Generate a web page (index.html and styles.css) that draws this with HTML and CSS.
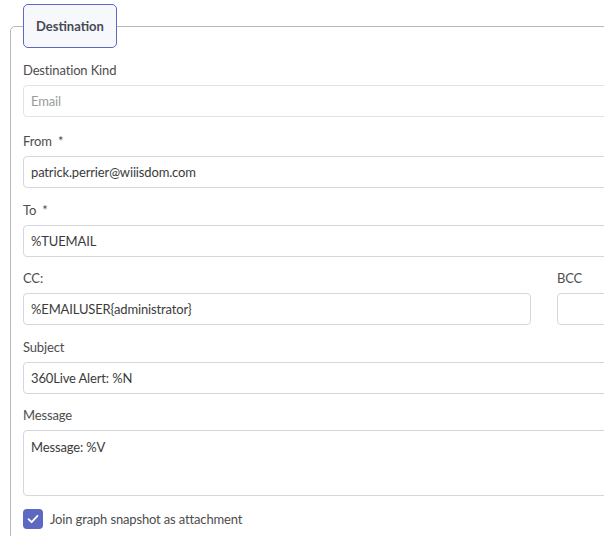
FILE: index.html
```html
<!DOCTYPE html>
<html lang="en">
<head>
    <meta charset="UTF-8">
    <title>Destination</title>
    <link rel="stylesheet" href="styles.css">
</head>
<body>
    <div class="panel">
        <div class="legend">Destination</div>

        <div class="field first">
            <label class="label">Destination Kind</label>
            <div class="input disabled">Email</div>
        </div>

        <div class="field">
            <label class="label">From <span class="req">*</span></label>
            <div class="input">patrick.perrier@wiiisdom.com</div>
        </div>

        <div class="field">
            <label class="label">To <span class="req">*</span></label>
            <div class="input">%TUEMAIL</div>
        </div>

        <div class="row">
            <div class="field">
                <label class="label">CC:</label>
                <div class="input">%EMAILUSER{administrator}</div>
            </div>
            <div class="field">
                <label class="label">BCC</label>
                <div class="input"></div>
            </div>
        </div>

        <div class="field">
            <label class="label">Subject</label>
            <div class="input">360Live Alert: %N</div>
        </div>

        <div class="field">
            <label class="label">Message</label>
            <div class="input textarea">Message: %V</div>
        </div>

        <div class="check-row">
            <span class="checkbox">
                <svg width="12" height="10" viewBox="0 0 12 10">
                    <path d="M1.5 5.2 L4.6 8.2 L10.5 1.8" fill="none" stroke="#fff" stroke-width="1.8" stroke-linecap="round" stroke-linejoin="round"/>
                </svg>
            </span>
            <span class="check-label">Join graph snapshot as attachment</span>
        </div>
    </div>
</body>
</html>
```

FILE: styles.css
```css
/* General */
html {
    overflow: hidden;
}

body {
    margin: 0;
    padding: 26px 0 0 10px;
    font-family: Lato, "Noto Sans", sans-serif;
    font-size: 13px;
    letter-spacing: -0.15px;
    color: #444;
    background: #fff;
    overflow: hidden;
}

/* Outer group box */
.panel {
    width: 1060px;
    height: 560px;
    border: 1px solid #b8b8b8;
    border-radius: 5px 0 0 0;
    padding: 0 12px;
}

.legend {
    display: flex;
    align-items: center;
    width: fit-content;
    height: 42px;
    padding: 0 12px;
    margin-top: -23px;
    margin-bottom: 13px;
    border: 1px solid #5c68c2;
    border-radius: 5px;
    background: #f7f8fc;
    font-weight: bold;
    color: #474a55;
    letter-spacing: 0;
}

/* Fields */
.field {
    margin-bottom: 12.5px;
}

.field.first {
    margin-bottom: 15px;
}

.label {
    display: block;
    line-height: 18px;
    margin-bottom: 6px;
    color: #4d4d4d;
}

.req {
    margin-left: 3px;
}

.input {
    box-sizing: border-box;
    height: 32px;
    line-height: 30px;
    padding: 0 7px;
    border: 1px solid #d4d7dc;
    border-radius: 4px;
    color: #3b3b3b;
    background: #fff;
}

.input.disabled {
    color: #9a9a9a;
    border-color: #e1e3e6;
}

.textarea {
    height: 66px;
    line-height: 18px;
    padding-top: 7px;
}

.row {
    display: grid;
    grid-template-columns: 508px 508px;
    gap: 26px;
}

/* Checkbox */
.check-row {
    display: flex;
    align-items: center;
    gap: 7px;
    margin-top: 1px;
}

.checkbox {
    display: flex;
    align-items: center;
    justify-content: center;
    width: 20px;
    height: 20px;
    border-radius: 4px;
    background: #5c68c2;
}

.check-label {
    color: #4d4d4d;
}
```
